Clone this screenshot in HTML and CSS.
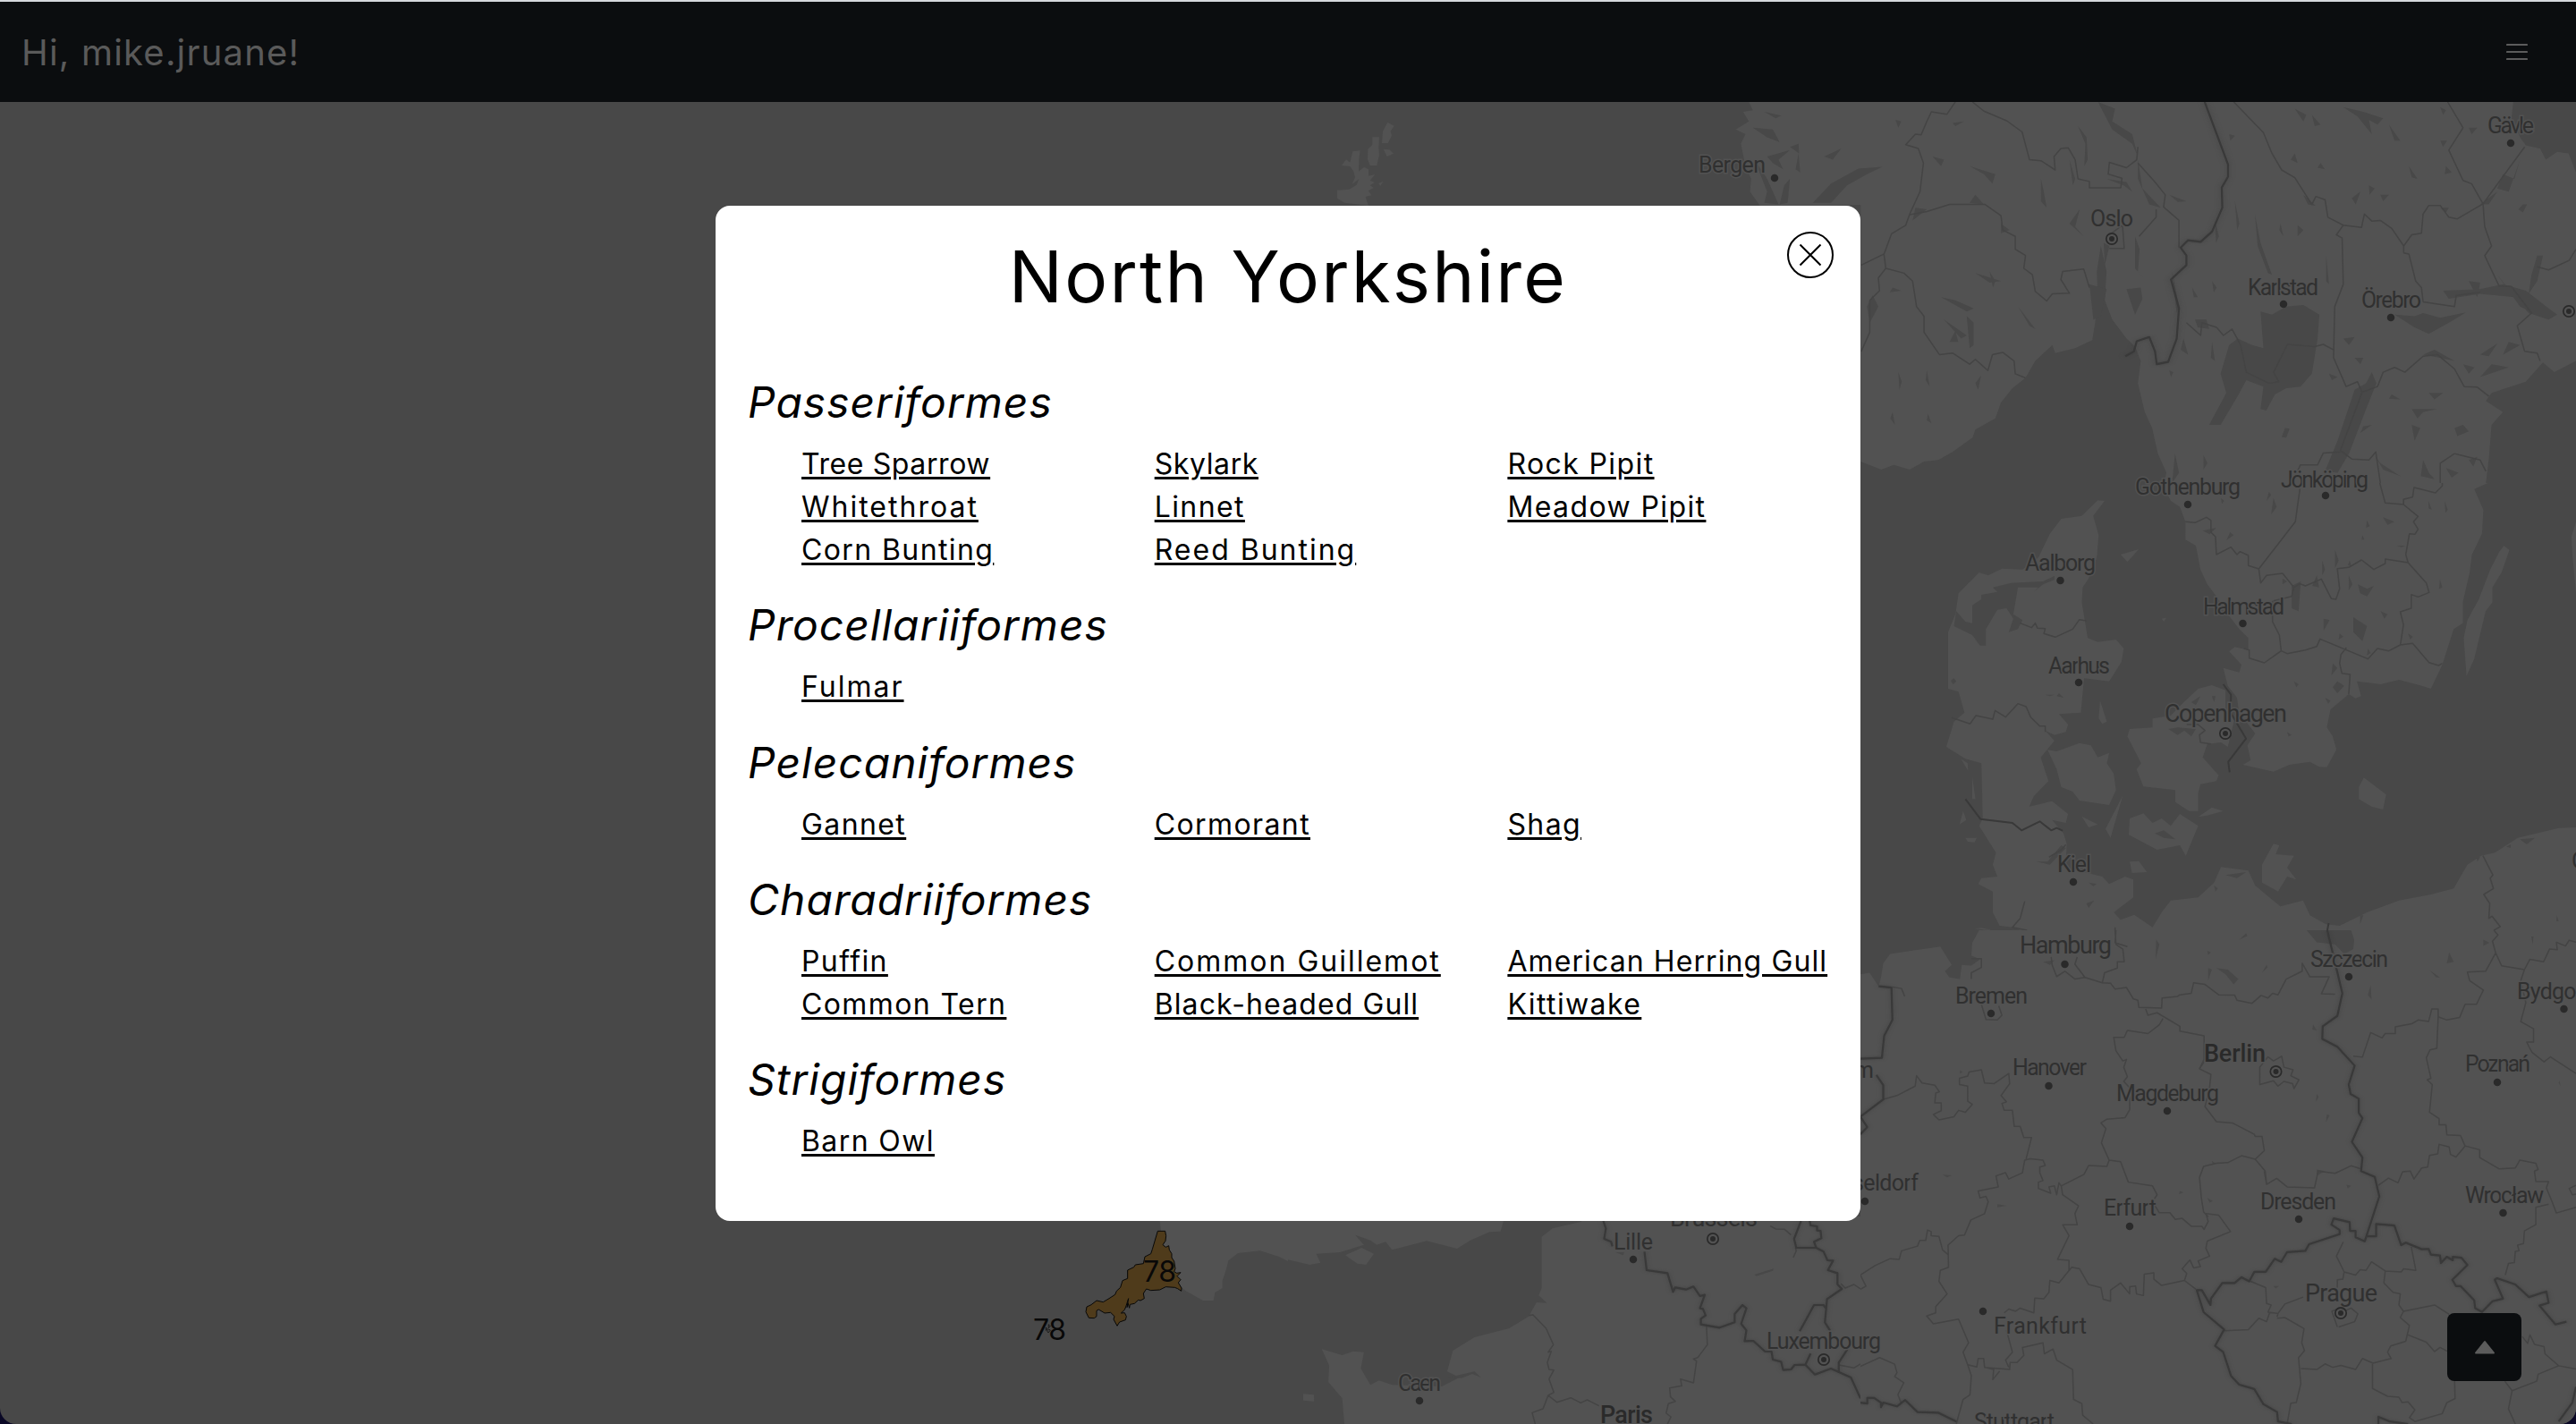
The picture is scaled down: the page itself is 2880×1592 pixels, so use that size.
FILE: index.html
```html
<!DOCTYPE html>
<html lang="en">
<head>
<meta charset="utf-8">
<title>North Yorkshire</title>
<link rel="stylesheet" href="styles.css">
</head>
<body>
<div class="page">
  <header class="navbar">
    <span class="greeting">Hi, mike.jruane!</span>
    <svg class="menu-icon" viewBox="0 0 24 20"><path d="M1 2H23M1 10H23M1 18H23"/></svg>
  </header>
  <main class="map">
    <svg class="tiles" viewBox="0 114 2880 1478">
      <!-- Shetland and Orkney -->
      <svg x="1480" y="110" width="120" height="120" viewBox="0 0 360 360">
        <path class="land" d="M214 80 236 92 224 110 228 125 215 150 195 150 198 110ZM163 130H186L184 165 186 190 178 225 155 225 147 205 148 170 163 155ZM97 178 122 175 118 205 117 245 135 230 150 238 150 260 172 255 155 275 170 282 155 292 167 300 150 310 160 325 140 330 150 360 70 350 45 335 45 308 85 305 110 290 118 270 95 288 105 265 100 245 88 228 60 225 75 205 88 215ZM200 170 220 172 234 185 212 195ZM183 285 200 278 190 293Z"/>
      </svg>
      <!-- Scandinavia -->
      <svg x="1880" y="0" width="1000" height="540" viewBox="0 0 1568 1512" preserveAspectRatio="none">
        <path class="land" d="M118 319 125 345 108 350 118 380 95 405 112 420 104 450 112 520 122 560 120 600 140 650 314 641V1445L350 1470 372 1455 400 1470 425 1445 450 1440 475 1415 510 1370 515 1345 550 1310 560 1260 580 1215 603 1183 620 1130 650 1080 655 1105 690 1090 720 1065 725 1010 730 950 728 850 735 770 745 850 742 940 755 1000 780 1060 795 1085 805 1130 800 1200 812 1290 825 1340 835 1420 850 1480 845 1512H1410L1415 1440 1420 1330 1440 1290 1410 1255 1420 1230 1480 1195 1510 1135 1530 1165 1568 1130V540L1555 480 1535 475 1515 500 1505 465 1480 455 1470 430 1455 370 1458 319Z"/>
        <path class="water" d="M1015 975 1035 985 1060 960 1090 955 1118 985 1115 1060 1105 1170 1085 1210 1060 1215 1040 1235 1025 1285 1015 1280 1020 1210 990 1190 975 1240 945 1330 925 1330 955 1230 945 1170 960 1080 975 1060 1000 1080 1020 1090ZM1210 1165 1218 1200 1200 1280 1170 1420 1150 1480 1128 1475 1150 1380 1180 1220 1200 1200ZM1250 985 1285 990 1300 980 1330 995 1375 978 1350 1005 1310 1045 1285 1025ZM1335 910 1400 905 1440 890 1480 910 1495 930 1520 965 1535 985 1520 1000 1485 980 1460 930 1400 920 1345 935Z
        M230 635 262 575 310 528 352 522 325 545 290 580 262 635ZM125 400 160 405 172 445 150 430ZM150 490 190 470 170 500 178 530 160 510ZM128 500 150 560 170 640 145 635 150 600ZM180 580 190 560 186 635 172 640ZM205 480 208 540 200 530ZM145 350 175 362 165 370ZM190 460 205 450 206 480ZM250 490 280 465 265 500ZM375 375 385 380 380 400ZM475 385 495 380 480 395ZM440 490 460 500 455 520ZM505 520 550 545 545 575 530 545ZM630 560 635 600 640 650 630 630ZM730 319 760 340 755 380 790 420 800 490 790 450 755 405ZM745 560 780 570 790 600 775 580ZM695 395 710 430 712 500 706 520 708 450ZM680 500 690 560 686 580ZM800 500 808 590 840 650 820 640 800 560ZM680 700 698 655 690 710 705 740ZM740 760 750 770 742 830ZM795 740 803 780 800 850 810 870 795 840ZM780 905 805 900 808 935 795 985ZM715 890 745 905 735 990 722 1000ZM560 700 575 720 560 730ZM515 610 530 640 505 635ZM410 650 430 655 405 690ZM335 925 345 960 330 1010 325 960ZM370 900 385 910 365 915ZM455 930 480 940 512 965 500 975ZM500 990 512 1010 512 1080 505 1090ZM460 1000 500 1050 490 1060ZM480 1035 485 1070 470 1070ZM540 850 550 880 546 900ZM515 855 560 880 540 885ZM590 960 620 1030 610 1020ZM430 1160 435 1210 428 1190ZM370 1290 374 1330 366 1310ZM432 1295 438 1325 430 1315ZM380 1165 386 1195 382 1220ZM525 1175 520 1220 515 1200ZM855 610 885 630 870 632ZM960 420 970 425 962 440ZM1075 340 1095 360 1090 380ZM1105 360 1120 390 1110 395ZM1160 335 1195 350 1230 370 1220 390 1205 375 1210 420 1185 365ZM1240 390 1260 440 1250 440ZM1330 335 1340 345 1335 360ZM1380 400 1395 400 1385 420ZM1330 440 1342 440 1335 460ZM1275 520 1290 560 1280 555ZM1075 480 1080 510 1068 500ZM1120 510 1128 530 1115 525ZM1340 520 1350 540 1338 545ZM1205 580 1215 590 1206 610ZM1175 620 1190 600 1182 640ZM1090 610 1112 645 1098 640ZM1225 610 1240 610 1230 630ZM1475 640 1482 640 1475 665 1467 655ZM1330 650 1345 650 1340 665ZM970 630 978 700 974 720ZM1005 670 1015 760 1035 860 1028 855 1010 770ZM935 690 942 740 937 760ZM1050 700 1055 740 1048 720ZM1080 705 1090 720 1080 740ZM1130 800 1135 890 1130 880ZM860 850 872 960 868 980ZM930 880 938 900 933 915ZM895 900 905 930 898 930ZM900 1000 920 1000 925 1030 905 1025ZM880 1060 888 1110 875 1095ZM930 1070 935 1130 928 1120ZM1440 545 1460 560 1470 500 1450 600 1430 590ZM1400 640 1430 600 1415 640ZM1500 800 1510 800 1500 880 1485 920 1490 860ZM1430 860 1470 950 1500 985 1470 960ZM1380 880 1400 885 1395 930ZM1300 1110 1320 1095 1355 1130 1330 1120ZM1370 1140 1390 1150 1380 1170ZM1400 1110 1430 1075 1415 1115ZM1420 1140 1450 1150 1400 1180ZM1450 1070 1470 1080 1440 1110ZM1160 1060 1180 1055 1170 1080ZM1180 1120 1195 1120 1190 1140ZM1135 1170 1150 1180 1140 1190ZM1245 1235 1260 1250 1240 1248ZM1310 1230 1335 1230 1320 1250ZM1280 1280 1325 1280 1300 1290 1290 1310ZM1195 1335 1210 1330 1190 1355ZM1280 1330 1295 1340 1285 1380ZM1355 1340 1370 1330 1380 1350 1360 1365ZM1058 1340 1066 1342 1060 1370 1052 1368ZM1215 1425 1225 1450 1260 1490 1230 1470ZM1300 1440 1310 1480 1320 1500 1296 1490ZM1380 1440 1395 1430 1388 1460ZM1340 1465 1362 1480 1350 1495ZM915 1425 922 1450 915 1470ZM865 1420 872 1480 860 1512ZM855 1160 862 1165 858 1180ZM1080 1160 1098 1155 1085 1185Z"/>
        <path class="region" d="M480 319 465 358 438 350 430 380 420 422 410 420 393 453 415 465 424 510 418 600 400 670 393 705 368 732 355 795 315 830M400 672 430 662 470 640H532L560 675 563 720 585 740V780L603 800 600 840 615 860 620 912 640 942 650 920 680 918 665 875 668 850 705 842 715 900M355 797 358 840 390 855 405 880 412 960 425 990V1040L452 1110 475 1105 505 1140 515 1125 537 1160 545 1110 563 1103 583 1130 585 1170 603 1183M358 840 345 870 347 910 330 940V1040L315 1100M510 319 530 348 570 378 597 413 610 500 630 503 655 532 653 490 665 465 678 463 690 500 695 560 715 568V588H770L772 558 748 545 750 508 780 525 798 500 800 460M800 510 830 570 848 610 845 648 872 690V775M832 655V680L802 740M750 735 773 705 776 778H750M968 319 1020 415 1035 480 1052 532 1075 556 1105 640 1112 615 1128 625 1133 680 1160 705 1192 712 1197 670 1210 692 1225 690 1245 715 1266 770V792L1275 795 1287 880 1297 900 1300 945M1266 770 1280 735 1297 730 1300 670 1310 643H1330L1345 680 1360 685 1405 638 1478 460M1343 319 1370 400 1345 470 1370 565 1385 575 1405 638 1408 710 1420 770 1408 800 1433 895 1455 897 1490 980 1465 1020 1478 1100 1500 1105 1505 1130M1160 705 1148 735 1158 745 1160 890 1145 960 1143 1120 1165 1210 1185 1195 1193 1228 1220 1210 1230 1165 1250 1150 1268 1165 1300 1115 1325 1110 1355 1155 1372 1210 1395 1212 1415 1240M1193 1228 1155 1410 1175 1437 1205 1440 1217 1415 1225 1512M1155 1415 1125 1418 1115 1455 1085 1455 1070 1512M1300 945 1355 960 1358 925 1400 915M1500 835 1520 845 1556 815 1568 780M885 1010 910 1050 912 1010 938 1025 950 1050 965 1030 980 1080 990 1165 1030 1200 1047 1195 1038 1165 1062 1078 1110 1085 1125 1078 1143 1095M1355 1420 1330 1450V1512M1355 1420 1400 1440 1410 1475"/>
        <path class="border-glow" d="M917 319 958 515V553L947 587 948 650 930 725 910 757 888 752 875 775 885 800V830L858 875 872 965 868 1060 853 1133 833 1140 830 1100 820 1055 798 1068 793 1100 778 1115"/>
      </svg>
      <!-- Denmark and southern Sweden -->
      <svg x="2080" y="540" width="800" height="500" viewBox="0 0 1568 1500" preserveAspectRatio="none">
        <path class="land" d="M660 0 680 60 700 80 712 130V190L735 210 745 290 760 340 780 380 800 430 830 490 850 520V560L820 550 808 565 835 610 830 635 795 620 805 680 825 720 830 770 865 840 848 880 855 930 838 945 905 968 940 945 985 935 1005 952 1022 953 1043 895 1035 850 1022 820 1030 760 1070 708 1085 722 1097 715 1088 665 1140 675 1180 660 1230 680 1250 690 1275 610 1300 490 1320 470V400L1335 300 1340 240 1362 170 1365 90 1345 20 1375 0ZM1410 210 1422 225 1405 300 1385 350V400L1370 430 1345 590 1328 647 1322 520 1330 460 1355 390 1380 290 1400 230Z
        M520 58 535 60 510 110 522 175 518 250 500 320 487 350 485 400 498 520 520 533 560 525 577 555 572 600 545 665 490 655 483 770 435 775 455 810 450 835 425 845 405 830 425 865 395 920 412 1000 380 1050 370 1085 420 1067 455 1110 450 1140 420 1130 445 1175 452 1210 450 1290 530 1320 545 1345 580 1320 598 1330V1390L555 1440 570 1465 600 1448 640 1490 660 1440 680 1400 740 1390 775 1340 790 1288 850 1300 865 1350 920 1420 970 1400 985 1450 1020 1480 1050 1485 1110 1440 1180 1400 1250 1380 1300 1360 1330 1280 1360 1250 1390 1240 1440 1190 1530 1157 1568 1155V1500H350L335 1490 305 1485 290 1440V1370L258 1345 265 1325 300 1320 290 1280 297 1240 260 1150 268 1125 265 940 230 925 188 885 205 800 228 770 215 700 192 690V500L208 440 215 370 260 300 280 310 310 287 355 290 390 250 415 170 440 120 485 110Z
        M410 895 430 900 480 872 505 880 520 920 545 905 540 940 555 975 560 1030 545 1080 480 1065 465 1035 440 1020 430 960ZM590 825 640 820V790L680 780 705 740 740 690 770 678 800 695V760L820 790 805 885 790 870 760 875 750 920 785 980 780 1000 745 1010 740 1040 740 1100 720 1100 690 1070V1030L620 1018 605 960 615 940 585 850ZM590 1125 620 1108 640 1140 660 1125 680 1150 700 1110 740 1150 713 1250 700 1215 650 1230 588 1180ZM575 1048 548 1190 537 1160ZM740 1120 770 1088 795 1100 760 1115ZM1103 988 1152 1045 1145 1095 1120 1085 1092 1060V1020ZM570 240 610 222 585 265ZM905 1210 918 1215 910 1245 950 1250 935 1290 955 1330 935 1320 915 1370 880 1340V1280ZM590 1270 610 1268 628 1305 595 1308ZM1568 130 1558 180 1560 240 1568 370ZM525 730 540 800 530 808 522 790ZM485 1118 520 1145 500 1155ZM245 985 252 1060 245 1060ZM220 925 235 940 236 965ZM230 1190 255 1190 250 1205 235 1203ZM225 1100 232 1130 217 1145ZM250 1495 265 1492 290 1500ZM660 455 670 452 665 465Z"/>
        <path class="water" d="M425 312 400 330 330 335 290 350 300 365 265 375V390L245 410V470L230 465 210 430 205 480 245 510 262 545H275V490L300 425 320 420 335 455 325 500 345 490 355 460 335 440 345 350 390 350 380 365 400 340 425 325ZM205 655 210 665 203 675 198 663ZM405 710 425 710 415 715ZM435 705 445 720 430 715ZM725 735 745 715 735 745ZM770 715 778 715 775 735ZM675 825 695 820 735 825 725 850 710 830 695 845ZM385 1270 410 1270 440 1215 450 1225 415 1280ZM495 1410 512 1400 500 1425ZM500 1340 518 1345 510 1352ZM800 1315 845 1305 825 1325ZM775 1350 783 1360 778 1370ZM645 1175 665 1165 690 1195 665 1190ZM895 30 900 40 890 60ZM905 50 912 80 900 105ZM810 165 818 175 802 192ZM750 160 780 150 765 172ZM790 50 797 60 792 70ZM1110 125 1116 145 1108 150ZM1145 115 1170 130 1155 140ZM1245 60 1252 90 1245 85ZM1280 60 1287 90 1282 100ZM1100 175 1104 190 1098 190ZM1175 210 1195 210 1185 215ZM1040 225 1048 260 1040 285ZM1012 260 1018 290 1012 310ZM1072 260 1076 280 1068 275ZM1070 310 1078 340 1070 360ZM1090 340 1110 355 1125 345 1110 380 1095 370ZM1270 325 1275 350 1268 355ZM945 345 965 330 960 430 945 420ZM925 320 935 330 925 340ZM1000 310 1005 350 990 345ZM1140 430 1155 440 1148 455ZM1015 455 1028 460 1015 495ZM1080 450 1110 480 1100 530 1080 500ZM1050 505 1058 515 1048 525ZM1200 505 1210 515 1205 525ZM1112 555 1118 570 1110 578ZM1035 605 1045 620 1032 645ZM1045 665 1060 680 1045 705 1035 685ZM950 665 960 675 955 685ZM1018 720 1030 730 1025 740ZM935 835 945 845 938 850ZM1445 1195 1478 1190 1460 1212ZM1415 1220 1425 1212 1425 1223ZM1350 1255 1358 1255 1352 1270ZM1095 1450 1102 1450 1095 1480ZM1526 1450 1530 1470 1525 1470Z"/>
        <path class="region" d="M712 130 733 133 758 115 768 125V165L778 180 780 240 812 215 825 240 832 230 850 243V277L873 288 953 130 963 20M873 288 877 335 890 310 925 303 950 350 945 380 905 395M950 350 963 338 975 345 1010 322 1032 388 1042 390 1050 355 1045 287 1070 283 1098 258 1125 290 1150 270V255L1200 267 1240 335 1246 367 1222 382 1207 374V420L1183 432 1190 475 1183 543M1200 267 1195 240 1203 170 1215 172 1222 155 1212 130 1222 112 1190 72 1150 67 1138 0M1190 72V55L1210 47 1213 15 1260 33 1275 10V0M903 395V465L918 510 922 563 935 572 975 560 1000 548 1007 523 1112 590 1133 555 1158 563 1183 543 1210 538 1246 602 1267 612 1275 605M840 555 852 560V587L885 603 922 563M1065 552 1053 575 1050 605 1055 638 1073 642 1070 708M350 470 375 485 383 470 388 487 405 488 402 505 427 517 465 490 480 458 495 462M200 787 240 808 253 780 290 792 295 763 318 785 345 740 363 750 373 785 393 815H405V835M715 810 740 810 755 830 743 845 745 870 768 875M450 1213 440 1230 413 1255M360 1403 350 1460 333 1490 365 1500M558 1490V1500M1364 1250 1386 1315 1380 1325 1387 1360 1366 1380 1379 1410 1377 1460 1384 1453 1402 1488 1388 1500"/>
        <path class="border" d="M795 675 812 710 811 770 845 857 806 935 809 970M230 1060 263 1127 333 1140 353 1165 393 1135 418 1165 430 1157 443 1166M1026 1476 1023 1500"/>
      </svg>
      <!-- Germany, Poland and Czechia -->
      <svg x="2080" y="1040" width="800" height="552" viewBox="0 0 1568 1568" preserveAspectRatio="none">
        <rect class="land" width="1568" height="1568"/>
        <path class="water" d="M0 0H260L245 40 243 80 262 92 243 112 222 110 218 155 195 150 185 130 200 110 175 52 110 65 65 75 50 105 45 150 40 178 20 135 0 140ZM978 0H1075L1082 30 1080 60 1060 75 1040 45 1000 38ZM648 30 655 45 647 92ZM830 30 845 10 848 18ZM760 65 768 70 762 78ZM762 120 770 125 762 160ZM780 120 805 125 828 155 818 172 800 140ZM890 110 892 118 880 135ZM1290 70 1300 100 1285 105ZM1365 30 1378 40 1365 50ZM1248 128 1270 150 1262 150ZM1118 175 1120 220 1112 205ZM992 300 1000 318 990 315ZM1000 520 1004 530 998 545ZM1022 585 1028 588 1020 610ZM1532 478 1534 495 1530 485ZM700 828 708 833 698 838ZM300 870 320 875 300 880ZM760 850 772 860 765 865ZM180 776 200 778 190 785ZM1065 808 1075 812 1068 820ZM1000 760 1018 765 1000 780ZM905 1130 917 1130 910 1138ZM400 100 425 95 415 110ZM1470 20 1475 20 1473 45ZM218 445 224 450 218 455ZM770 732 778 740 772 745Z"/>
        <path class="region" d="M243 90H265V118L243 135V155M558 0 560 45 575 60 578 100 563 100V120L535 135 530 167M475 85 470 108 492 150 530 167 548 168 558 187 583 182 598 218 608 222 610 245 660 247 661 215 695 210 700 205 725 200 730 167 755 172 785 205 820 206 825 222 858 232 878 207 893 215 903 200 915 205 933 155 968 130V105L985 148H1027L1010 202 1040 203M418 85 420 110 430 147 448 130 470 155 492 150M560 0 558 40 585 52M70 180 90 185 97 210M625 250 630 270 650 262 700 305V320L753 335V410L743 440 768 458 765 500 755 560 780 608 815 612 863 648 865 655 880 655 885 700 865 727 887 765 890 807 912 788 935 815 995 818 1003 765 1040 772 1075 748 1095 757M663 280 655 300 630 328 585 318 578 340H555L560 383 575 415 583 410 577 435 585 465 577 480 590 500V570L580 595 540 600 527 612 538 630 528 675 545 730 570 735 587 800 640 812 650 840 640 862 655 897H678L690 918 705 915 725 940H748L753 950 762 925 757 900 785 905 811 957 760 987 757 1010 765 1035 740 1050 745 1068 730 1072 722 1047 705 1075 715 1090 710 1112 735 1140M710 1112 660 1128 643 1108V1088L622 1092 620 1160 605 1155 603 1130 590 1132V1155L570 1120 548 1143V1178L532 1172 527 1135 500 1125 480 1075 463 1070 435 1120 415 1112 413 1150 402 1170 382 1168 380 1215 350 1200 340 1210 325 1203 315 1215M545 730 540 750 500 747 490 775 440 812 435 802 430 840 425 812 413 815 417 835 390 820V800L400 795 393 770V752L405 747 400 730 372 726 360 730 355 770 325 790 318 770 297 780 302 815 258 828 262 850 275 845 280 862 272 900 242 920 228 968 215 970 192 1000 193 1070 175 1080 172 1115 190 1155 165 1195V1215L145 1225 160 1250 215 1235 237 1310 225 1340 235 1380 243 1415 240 1475 225 1490 210 1568M440 812 443 840 478 875 470 900 475 935H443L457 970 432 1045 457 1048V1080M363 726 375 658H358L350 623H337L333 572H315L310 550 320 545 308 525 327 487 325 455 293 487 272 485 265 443 238 450 235 463 217 470V490L235 495V543L245 553 230 578 215 572 205 592 172 602 160 585 177 573V548H163L165 517 173 513 163 492 135 485 123 462 120 495 80 525 50 537M0 1140 12 1130 0 1095 32 1065 65 1043 85 1045 90 1018 125 1003 130 985H143L147 952 155 957V970L172 972 180 1015 192 1030M265 235 275 283 300 285 310 270 303 240M875 435V490L905 478 915 495 928 480 947 487 950 503 961 475 943 462 948 443 928 435 923 400 905 415 893 402ZM743 440 753 418M890 807 885 765M865 727 835 716 805 738 780 740 752 750 743 785 747 850 752 895 762 910M1388 0 1397 15 1385 35 1392 72 1405 113 1455 125 1467 92 1497 100 1510 60 1527 62 1525 38 1545 50 1553 32 1568 38M1392 72 1370 130 1330 133 1335 160 1365 190 1350 235H1325L1313 277 1285 285 1266 275V250H1252L1245 290 1222 285 1208 297 1172 307V328H1150L1143 342 1118 325 1100 403 1080 400M1266 275 1263 375 1248 380 1240 405 1250 470 1242 475 1253 490 1247 578 1268 598V618H1283L1285 650 1315 652 1325 685 1305 720 1293 712 1290 688 1268 680 1265 710 1247 715 1243 752 1230 755 1213 790 1205 765 1188 767 1178 802 1157 787 1135 810M1325 685 1357 697V722L1400 758 1435 755 1445 730 1480 740 1485 760 1477 765 1480 798H1508L1503 818 1515 860 1525 898 1568 880M1508 870 1480 880V935L1455 955 1453 995 1440 1000 1443 1018 1435 1020 1433 1055 1420 1058 1413 1095M1455 125 1447 160 1458 230 1447 290 1475 313V355H1460L1465 370 1472 388 1498 418 1512 402 1568 455M1568 810 1553 820 1560 840 1568 838M1058 990 1043 1035 1060 1085 1085 1095 1095 1078 1108 1080 1120 1053 1150 1082 1185 1085 1190 1075 1217 1080 1207 1005M1060 1085 1057 1108 1045 1110V1135M1150 1082 1147 1120 1167 1150 1183 1155 1180 1190 1190 1210 1258 1190 1290 1220M1190 1210 1183 1230 1203 1255 1195 1305 1162 1320 1155 1340 1163 1360 1123 1375 1100 1360 1085 1395 1053 1382 1035 1388 1018 1377 1000 1395 965 1392M1200 1285 1240 1308 1258 1338 1270 1325 1286 1337M855 1115 888 1135 890 1185 900 1190 893 1213 915 1217 913 1228M798 1272 850 1268 873 1232 890 1243 897 1213M913 1232 930 1230 972 1265 967 1310 973 1335 960 1358 965 1440 955 1500 943 1502 935 1568M915 1217 930 1187 970 1165M1045 1260 1033 1210 1050 1200 1065 1207 1075 1200 1090 1218 1083 1243 1048 1260M1122 1378V1455L1155 1480 1180 1483 1187 1500 1200 1498 1215 1523 1203 1548 1215 1560 1275 1535 1285 1500 1303 1487 1302 1432M1412 1432 1428 1462 1420 1520 1435 1568M1428 1462 1482 1432 1485 1410 1530 1383 1568 1393M1450 1290 1462 1312 1467 1285 1477 1315 1498 1322 1500 1345 1530 1383M235 1380 255 1387 258 1360H270L272 1388 327 1395 328 1373H343L358 1350 355 1325 400 1310 403 1345 422 1330 430 1365 465 1395 467 1490 485 1503 487 1540 510 1568M325 1388 318 1365 333 1340 320 1270M272 1388 292 1395 290 1427 305 1400M0 1385 42 1357 75 1378 80 1405 75 1417 95 1437 82 1475 90 1503"/>
        <path id="borders-east" class="border-glow" d="M40 178 68 182 70 285 52 335 47 405 0 408M35 460 50 492V537L0 592 15 625 0 648M0 1500 15 1503V1485H30L45 1500V1515L50 1500 80 1512 98 1492 125 1530 170 1532 210 1560M1023 0 1056 200 1045 272 1013 305 1012 345 1045 370 1083 430 1070 490 1074 520 1092 535V580L1100 597 1077 672 1100 722 1097 765 1127 783 1137 845 1105 988 1085 975V955H1073L1072 927 1037 915 1032 935 1050 952V965L983 997 975 1018 935 1022 922 1053 908 1043 888 1085H863L852 1115 835 1102 820 1120H793L768 1170 767 1190 748 1143H737L752 1213 797 1268 777 1320 795 1340 812 1415 830 1443 863 1457 883 1505 913 1530 915 1560 945 1568M1108 972H1130V933L1170 938 1185 1000 1195 992 1230 1013 1245 1012 1250 1030 1270 1033 1272 1057 1285 1037 1298 1048V1037L1317 1040 1330 1063 1297 1110 1305 1130H1315L1345 1175 1347 1200 1362 1212 1385 1178 1408 1170 1390 1110 1395 1105 1435 1125 1465 1165 1503 1147 1508 1183 1488 1192 1523 1252 1547 1243M1135 1568V1545L1160 1560 1200 1568M1568 1450 1560 1500 1530 1560"/>
      </svg>
      <!-- England south coast, France and Benelux -->
      <svg x="1440" y="1340" width="640" height="252" viewBox="0 0 1320 756" preserveAspectRatio="none">
        <path class="land" d="M0 60H500L490 110 465 112 420 140 390 168 320 142 240 172 225 145 205 155 190 140 155 122 175 155 120 180 65 185 75 215 50 222 0 205ZM132 190 170 165 198 185 180 222 160 218ZM690 60 675 78 610 100 585 128V300L578 325 597 350 573 348 555 395 510 435 430 465 380 510 367 580 395 600 355 630 240 625 210 610 190 625 168 570 175 515 150 512 125 525 78 505 95 560 93 615 125 670 130 756H1320V60ZM35 655 60 658 60 680 35 677Z"/>
        <path class="water" d="M370 600 430 580 445 600 425 588 400 602ZM1075 255 1120 235 1118 242 1080 260ZM755 180 775 180 773 190Z"/>
        <path class="region" d="M555 392 565 390 595 435 612 490 600 515 607 512 598 550 602 573 613 575 602 605 613 650 600 660 588 705 563 718 570 756M600 660 620 683 652 668 675 685 690 675 717 695M965 430 967 490 945 533 935 538 942 545 935 618 905 605 908 628 880 635 882 665 893 680 877 688 872 720 883 732 875 756M1112 92 1125 102 1145 103 1160 122M1170 165 1172 175 1165 198M1275 285 1285 300 1305 288 1320 303M1270 558 1305 568 1320 555"/>
        <path id="borders-west" class="border-glow" d="M727 75 733 100 729 135 745 145 748 160M822 178 827 240 875 250 888 313 893 298 918 305 935 295 950 327 961 323 950 368 957 370 963 392 952 403V422L995 433 1030 415V387L1048 357 1057 368 1045 420 1057 442 1053 478 1073 477 1100 513H1115L1118 540 1137 547 1142 575 1160 573 1168 558 1193 557 1215 590 1252 570 1298 600 1320 670M1183 75 1167 135 1172 165H1218L1213 145 1230 133 1228 108 1220 107V93L1205 90 1203 75M1218 165 1235 178 1244 207 1257 208 1245 240 1267 250V287L1277 303 1243 337 1238 415 1250 443M1240 368 1235 357H1213L1180 445M1193 557 1205 520M1290 505 1270 550V580"/>
      </svg>
      <!-- Cornwall -->
      <svg x="1140" y="1360" width="300" height="160" viewBox="0 0 900 480">
        <path class="land" d="M470 15H900V150L870 135 807 115 732 123 700 148 692 180 680 215V240L655 255 650 282H615L555 248 540 235 480 100Z"/>
        <path class="county" d="M463 49H488L491 65 489 82 480 95 490 103 500 98 502 112 510 125V138L518 150 522 175 518 185 527 190 540 188 528 200 540 212 532 222 543 240 542 250 530 242 520 238 490 236 470 246 440 248 425 243 415 258 418 275 405 282 398 280 385 292 370 295 368 307 363 290 360 305 365 275 357 300 352 313 340 324 352 323 358 335 355 347 335 354 327 367 315 345 318 335 305 322 285 324 265 312 258 316V335L250 341 232 340 222 320 225 303 240 296 258 282 280 287 300 275 320 262 325 250 338 238 345 215 362 208V180L383 170 388 162 415 158 420 135 440 125 445 110Z"/>
        <path class="islet" d="M97 362 103 368 97 374ZM88 372 94 378 88 382ZM92 384 98 378 103 381 96 390Z"/>
      </svg>
      <g class="county-count">
        <text x="1278" y="1433" textLength="37">78</text>
        <text x="1155" y="1498" textLength="37">78</text>
      </g>
      <g class="city">
        <text x="1899" y="193" textLength="75">Bergen</text><text x="2781" y="149" textLength="52">Gävle</text>
        <text x="2337" y="253" textLength="48">Oslo</text><text x="2513" y="330" textLength="79">Karlstad</text>
        <text x="2640" y="344" textLength="67">Örebro</text><text x="2387" y="553" textLength="118">Gothenburg</text>
        <text x="2550" y="545" textLength="98">Jönköping</text><text x="2264" y="638" textLength="79">Aalborg</text>
        <text x="2463" y="687" textLength="91">Halmstad</text><text x="2290" y="753" textLength="69">Aarhus</text>
        <text class="large" x="2420" y="807" textLength="137">Copenhagen</text><text x="2300" y="975" textLength="38">Kiel</text>
        <text class="large" x="2258" y="1066" textLength="103">Hamburg</text><text x="2583" y="1081" textLength="87">Szczecin</text>
        <text x="2186" y="1122" textLength="81">Bremen</text><text x="2814" y="1117" textLength="114">Bydgoszcz</text>
        <text x="2250" y="1202" textLength="83">Hanover</text><text x="2366" y="1231" textLength="115">Magdeburg</text>
        <text class="capital" x="2464" y="1187" textLength="69">Berlin</text><text x="2756" y="1198" textLength="73">Poznań</text>
        <text x="2030" y="1331" textLength="115">Düsseldorf</text><text x="2014" y="1205" textLength="81">Arnhem</text>
        <text x="2352" y="1359" textLength="59">Erfurt</text><text x="2527" y="1352" textLength="85">Dresden</text>
        <text x="2756" y="1345" textLength="88">Wrocław</text><text class="large" x="2577" y="1455" textLength="81">Prague</text>
        <text x="2229" y="1491" textLength="104">Frankfurt</text><text x="2207" y="1598" textLength="90">Stuttgart</text>
        <text x="1975" y="1508" textLength="128">Luxembourg</text><text x="1804" y="1397" textLength="44">Lille</text>
        <text class="large" x="1867" y="1371" textLength="98">Brussels</text><text x="1563" y="1555" textLength="48">Caen</text>
        <text class="capital" x="1789" y="1591" textLength="59">Paris</text><text x="2875" y="971" textLength="90">Gdańsk</text>
      </g>
      <path class="dots" d="M1984 199h0M2807 160h0M2553 340h0M2673 355h0M2446 564h0M2600 554h0M2303.500 649h0M2507.500 697h0M2324 763h0M2318 986h0M2308.500 1078h0M2626 1092h0M2226 1133h0M2866.500 1128h0M2290.500 1214h0M2423 1242h0M2792 1210h0M2085 1343h0M2381 1371h0M2570 1363h0M2798.500 1356h0M2217 1466h0M1826 1408h0M1587 1566h0"/>
      <path class="dots ring-center" d="M2361 267h0M2872 348h0M2488 820h0M2544.500 1198h0M2617 1468h0M2039 1520h0M1915 1385h0"/>
      <g class="rings"><circle cx="2361" cy="267" r="6.200"/><circle cx="2872" cy="348" r="6.200"/><circle cx="2488" cy="820" r="6.200"/><circle cx="2544.500" cy="1198" r="6.200"/><circle cx="2617" cy="1468" r="6.200"/><circle cx="2039" cy="1520" r="6.200"/><circle cx="1915" cy="1385" r="6.200"/></g>
    </svg>

    <section class="modal">
      <svg class="close" viewBox="0 0 54 54"><circle cx="27" cy="27" r="25"/><path d="M15.500 15.500 38.500 38.500M38.500 15.500 15.500 38.500"/></svg>
      <h1 class="title">North Yorkshire</h1>
      <h2 class="order">Passeriformes</h2>
      <ul class="birds"><li class="tight"><a>Tree Sparrow</a></li><li class="tight"><a>Skylark</a></li><li><a>Rock Pipit</a></li><li class="wide"><a>Whitethroat</a></li><li><a>Linnet</a></li><li><a>Meadow Pipit</a></li><li><a>Corn Bunting</a></li><li class="wide"><a>Reed Bunting</a></li></ul>
      <h2 class="order">Procellariiformes</h2>
      <ul class="birds"><li class="wide"><a>Fulmar</a></li></ul>
      <h2 class="order">Pelecaniformes</h2>
      <ul class="birds"><li><a>Gannet</a></li><li><a>Cormorant</a></li><li><a>Shag</a></li></ul>
      <h2 class="order">Charadriiformes</h2>
      <ul class="birds"><li><a>Puffin</a></li><li class="wide"><a>Common Guillemot</a></li><li class="snug"><a>American Herring Gull</a></li><li><a>Common Tern</a></li><li class="snug"><a>Black-headed Gull</a></li><li><a>Kittiwake</a></li></ul>
      <h2 class="order">Strigiformes</h2>
      <ul class="birds"><li><a>Barn Owl</a></li></ul>
    </section>

    <div class="to-top"><svg viewBox="0 0 24 16"><path d="M12 2 22 14.500H2Z"/></svg></div>
  </main>
</div>
</body>
</html>
```
FILE: styles.css
```css
* { box-sizing: border-box; margin: 0; padding: 0; }
body {
  background: #0a0826;
  font-family: Inter, "Liberation Sans", sans-serif;
  color: #000;
}
.page {
  display: flex;
  flex-direction: column;
  height: 1592px;
  overflow: hidden;
  background: #484848;
  border-radius: 0 0 18px 18px;
  border-top: 2px solid #d5d9dd;
}
.navbar {
  display: flex;
  align-items: center;
  justify-content: space-between;
  height: 112px;
  padding: 0 54px 0 24px;
  background: #0b0d0f;
}
.greeting { font-size: 40px; letter-spacing: 1.2px; color: #5a5a5a; }
.menu-icon { width: 24px; height: 20px; fill: none; stroke: #5c5c5c; stroke-width: 2.2; stroke-linecap: round; }

.map { position: relative; flex: 1; display: flex; flex-direction: column; align-items: center; padding-top: 116px; }
.tiles { position: absolute; top: 0; left: 0; width: 2880px; height: 1478px; }
.land { fill: #525252; }
.water { fill: #484848; }
.region, .border, .border-glow { fill: none; vector-effect: non-scaling-stroke; stroke-linejoin: round; }
.region { stroke: #444; stroke-width: 1.5; }
.border { stroke: #393939; stroke-width: 2; }
.border-glow { stroke: #393939; stroke-width: 2.2; filter: drop-shadow(0 0 5px rgba(50, 50, 50, .5)); }
.county { fill: #4f3b1b; stroke: #080808; stroke-width: 3; }
.islet { fill: none; stroke: #080808; stroke-width: 2; }
.county-count text { font-size: 32px; fill: #080808; }
.city text { font: 25px Roboto, sans-serif; fill: #303030; stroke: #525252; stroke-width: 3; paint-order: stroke; }
.city .large { font-size: 27px; }
.city .capital { font-size: 27px; font-weight: 500; fill: #2a2a2a; }
.dots { fill: none; stroke: #2a2a2a; stroke-width: 8.5; stroke-linecap: round; }
.ring-center { stroke-width: 6; }
.rings { fill: none; stroke: #2a2a2a; stroke-width: 1.7; }

.modal {
  position: relative;
  width: 1280px;
  height: 1135px;
  padding: 27px 0 0 36px;
  background: #fff;
  border-radius: 16px;
}
.close { position: absolute; top: 28px; right: 29px; width: 54px; height: 54px; fill: none; stroke: #000; stroke-width: 2; }
.title { padding-right: 36px; text-align: center; font-size: 80px; font-weight: 400; line-height: 104px; letter-spacing: 2.2px; margin-bottom: 60px; }
.order { font-size: 48px; font-weight: 400; font-style: oblique; line-height: 57px; letter-spacing: 1px; margin-bottom: 17px; }
.birds { display: grid; grid-template-columns: repeat(3, 394.7px); padding-left: 60px; margin-bottom: 31.3px; list-style: none; }
.birds li { font-size: 32px; line-height: 48px; letter-spacing: 1.4px; white-space: nowrap; }
.birds .tight { letter-spacing: 0.6px; }
.birds .snug { letter-spacing: 1.1px; }
.birds .wide { letter-spacing: 2px; }
.birds a { text-decoration: underline; text-decoration-thickness: 3px; text-underline-offset: 3px; }

.to-top {
  position: absolute;
  right: 61px;
  bottom: 48px;
  display: flex;
  align-items: center;
  justify-content: center;
  width: 83px;
  height: 76px;
  background: #0b0d0f;
  border-radius: 8px;
}
.to-top svg { width: 24px; height: 16px; fill: #5c5c5c; stroke: #5c5c5c; stroke-width: 2; stroke-linejoin: round; }
```
